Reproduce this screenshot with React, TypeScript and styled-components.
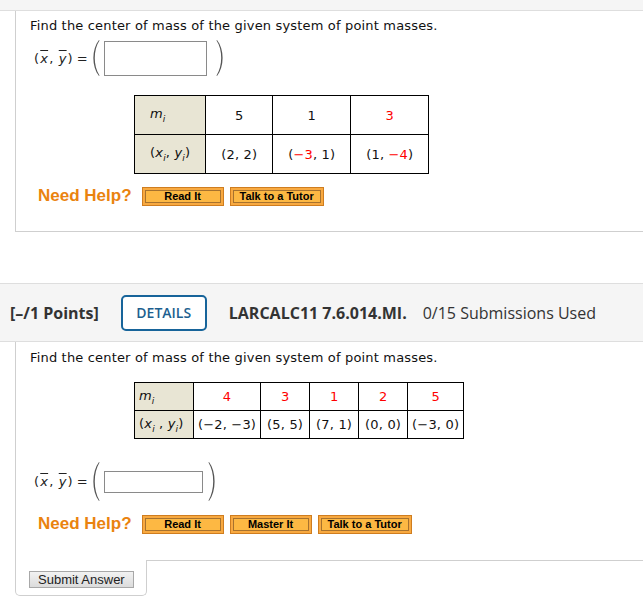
import React from 'react'
import styled, { createGlobalStyle } from 'styled-components'

const GlobalStyle = createGlobalStyle`
  body {
    margin: 0;
    background: #fff;
    font-family: "DejaVu Sans", Verdana, sans-serif;
    color: #000;
  }
`

const TopStrip = styled.div`
  height: 10px;
  background: #f5f5f5;
  border-bottom: 1px solid #dedede;
`

const Panel = styled.section<{ $pt: number; $pb: number; $bottom?: boolean }>`
  margin-left: 15px;
  border-left: 1px solid #cfcfcf;
  border-bottom: ${p => (p.$bottom ? '1px solid #cfcfcf' : 'none')};
  padding: ${p => p.$pt}px 0 ${p => p.$pb}px 14px;
  display: flex;
  flex-direction: column;
  align-items: flex-start;
`

const Prompt = styled.p`
  margin: 0;
  font-size: 13px;
  line-height: 16px;
  letter-spacing: 0.17px;
  color: #111;
`

const MathRow = styled.div<{ $mt: number }>`
  margin: ${p => p.$mt}px 0 0 4px;
  display: flex;
  align-items: center;
  font-size: 13px;
  letter-spacing: 0.17px;
  color: #222;
`

const Var = styled.i`
  text-decoration: overline;
  padding: 0 1px;
`

const Eq = styled.span`
  margin: 0 3px 0 4px;
`

const AnswerBox = styled.div<{ $w: number; $h: number }>`
  width: ${p => p.$w}px;
  height: ${p => p.$h}px;
  border: 1px solid #8a8a8a;
  background: #fff;
  margin: 0 ${p => (p.$h > 30 ? 9 : 5)}px 0 4px;
`

const DataTable = styled.table<{ $mt: number }>`
  border-collapse: collapse;
  margin: ${p => p.$mt}px 0 0 104px;
  font-size: 13px;
  letter-spacing: 0.17px;
  color: #111;
`

const Cell = styled.td<{ $compact?: boolean; $label?: boolean }>`
  border: 1px solid #000;
  height: ${p => (p.$compact ? 27 : 38)}px;
  min-width: ${p => (p.$compact ? (p.$label ? '50px' : '40px') : '0')};
  padding: 0 ${p => (p.$compact ? 4 : 15)}px;
  text-align: ${p => (p.$label ? 'left' : 'center')};
  background: ${p => (p.$label ? '#e8e5d4' : '#fff')};
  white-space: nowrap;
`

const Red = styled.span`
  color: #f00;
`

const HelpRow = styled.div<{ $mt: number }>`
  margin: ${p => p.$mt}px 0 0 8px;
  display: flex;
  align-items: center;
  gap: 6px;
`

const NeedHelp = styled.span`
  font-family: "Liberation Sans", Arial, sans-serif;
  font-weight: 700;
  font-size: 17px;
  color: #ea830f;
  margin-right: 4px;
`

const HelpButton = styled.button`
  min-width: 82px;
  height: 19px;
  padding: 0 9px;
  font-family: "Liberation Sans", Arial, sans-serif;
  font-weight: 700;
  font-size: 11px;
  color: #000;
  background: #fdb843;
  border: 1px solid #cf7d1f;
  box-shadow: inset 0 0 0 2px #f8a940, inset 0 0 0 3px #a7722e;
  cursor: pointer;
`

const QuestionHeader = styled.header`
  margin-top: 51px;
  height: 57px;
  background: #f5f5f5;
  border-top: 1px solid #dedede;
  border-bottom: 1px solid #dedede;
  display: flex;
  align-items: center;
  padding-left: 10px;
  font-family: "Open Sans", sans-serif;
  font-size: 16px;
  color: #333;
`

const Points = styled.span`
  font-weight: 700;
`

const DetailsButton = styled.button`
  margin: 0 22px;
  width: 86px;
  height: 36px;
  border: 2px solid #17649a;
  border-radius: 5px;
  background: #fff;
  color: #1d5f8f;
  font-family: "Open Sans", sans-serif;
  font-weight: 600;
  font-size: 14px;
  cursor: pointer;
`

const QuestionId = styled.span`
  font-weight: 700;
  margin-right: 16px;
`

const Footer = styled.div`
  margin-left: 15px;
  display: flex;
  align-items: flex-start;
`

const SubmitTab = styled.div`
  width: 132px;
  height: 36px;
  border: 1px solid #cfcfcf;
  border-top: none;
  border-radius: 0 0 5px 5px;
  padding: 9px 0 0 13px;
  box-sizing: border-box;
`

const FooterLine = styled.div`
  flex: 1;
  border-top: 1px solid #cfcfcf;
`

const SubmitButton = styled.button`
  height: 17px;
  padding: 0 8px;
  font-family: "Liberation Sans", Arial, sans-serif;
  font-size: 13px;
  line-height: 15px;
  color: #222;
  background: linear-gradient(#f2f2f2, #dcdcdc);
  border: 1px solid #a8a8a8;
  cursor: pointer;
`

const ParenSvg: React.FC<{ h: number; right?: boolean }> = ({ h, right }) => (
  <svg width="9" height={h} viewBox={`0 0 9 ${h}`} style={{ display: 'block' }}>
    <path
      d={`M8 0 C0.5 ${h * 0.25} 0.5 ${h * 0.75} 8 ${h} L8.5 ${h - 0.6} C2.2 ${h * 0.72} 2.2 ${h * 0.28} 8.5 0.6 Z`}
      fill="#555"
      transform={right ? `translate(9 0) scale(-1 1)` : undefined}
    />
  </svg>
)

const CenterLabel = () => (
  <span>
    (<Var>x</Var>, <Var>y</Var>)<Eq>=</Eq>
  </span>
)

const Mi = () => (
  <i>
    m<sub style={{ fontSize: '9px' }}>i</sub>
  </i>
)

const Xi = ({ spaced }: { spaced?: boolean }) => (
  <span>
    (<i>x<sub style={{ fontSize: '9px' }}>i</sub></i>
    {spaced ? ' , ' : ', '}
    <i>y<sub style={{ fontSize: '9px' }}>i</sub></i>)
  </span>
)

const prompt = 'Find the center of mass of the given system of point masses.'

export default function App() {
  return (
    <>
      <GlobalStyle />
      <TopStrip />
      <Panel $pt={7} $pb={25} $bottom>
        <Prompt>{prompt}</Prompt>
        <MathRow $mt={6}>
          <CenterLabel />
          <ParenSvg h={36} />
          <AnswerBox $w={101} $h={33} />
          <ParenSvg h={36} right />
        </MathRow>
        <DataTable $mt={19}>
          <tbody>
            <tr>
              <Cell $label><Mi /></Cell>
              <Cell>5</Cell>
              <Cell>1</Cell>
              <Cell><Red>3</Red></Cell>
            </tr>
            <tr>
              <Cell $label><Xi /></Cell>
              <Cell>(2, 2)</Cell>
              <Cell>(<Red>−3</Red>, 1)</Cell>
              <Cell>(1, <Red>−4</Red>)</Cell>
            </tr>
          </tbody>
        </DataTable>
        <HelpRow $mt={12}>
          <NeedHelp>Need Help?</NeedHelp>
          <HelpButton>Read It</HelpButton>
          <HelpButton>Talk to a Tutor</HelpButton>
        </HelpRow>
      </Panel>

      <QuestionHeader>
        <Points>[–/1 Points]</Points>
        <DetailsButton>DETAILS</DetailsButton>
        <QuestionId>LARCALC11 7.6.014.MI.</QuestionId>
        <span>0/15 Submissions Used</span>
      </QuestionHeader>

      <Panel $pt={8} $pb={26}>
        <Prompt>{prompt}</Prompt>
        <DataTable $mt={16}>
          <tbody>
            <tr>
              <Cell $compact $label><Mi /></Cell>
              <Cell $compact><Red>4</Red></Cell>
              <Cell $compact><Red>3</Red></Cell>
              <Cell $compact><Red>1</Red></Cell>
              <Cell $compact><Red>2</Red></Cell>
              <Cell $compact><Red>5</Red></Cell>
            </tr>
            <tr>
              <Cell $compact $label><Xi spaced /></Cell>
              <Cell $compact>(−2, −3)</Cell>
              <Cell $compact>(5, 5)</Cell>
              <Cell $compact>(7, 1)</Cell>
              <Cell $compact>(0, 0)</Cell>
              <Cell $compact>(−3, 0)</Cell>
            </tr>
          </tbody>
        </DataTable>
        <MathRow $mt={23}>
          <CenterLabel />
          <ParenSvg h={39} />
          <AnswerBox $w={97} $h={20} />
          <ParenSvg h={39} right />
        </MathRow>
        <HelpRow $mt={13}>
          <NeedHelp>Need Help?</NeedHelp>
          <HelpButton>Read It</HelpButton>
          <HelpButton>Master It</HelpButton>
          <HelpButton>Talk to a Tutor</HelpButton>
        </HelpRow>
      </Panel>
      <Footer>
        <SubmitTab>
          <SubmitButton>Submit Answer</SubmitButton>
        </SubmitTab>
        <FooterLine />
      </Footer>
    </>
  )
}
